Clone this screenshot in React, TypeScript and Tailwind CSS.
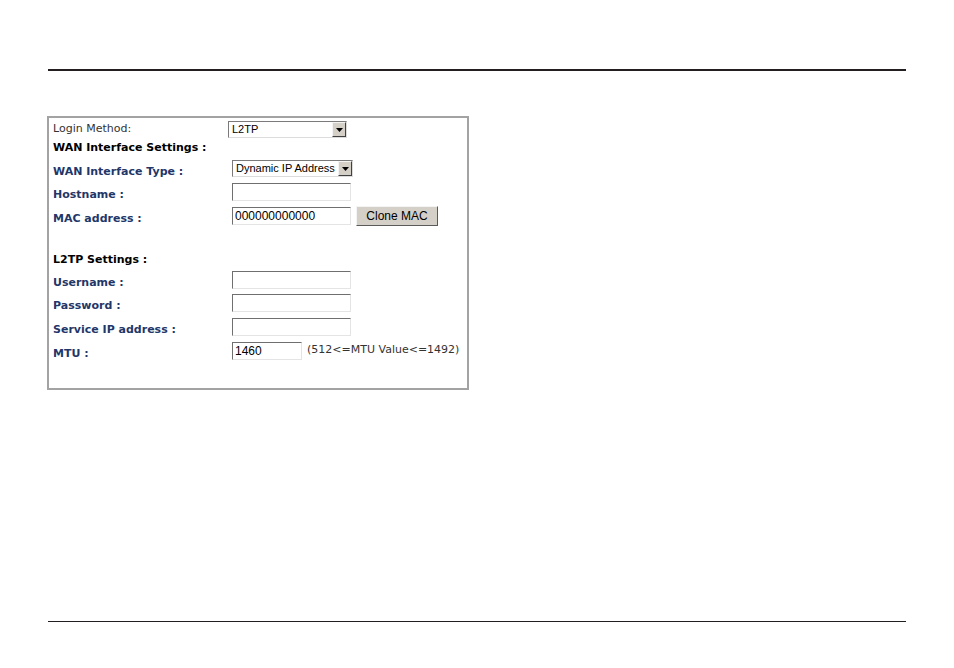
import React from "react";

const label = "font-['DejaVu_Sans',Verdana,sans-serif] text-[11px] font-bold text-[#1f3769]";
const heading = "font-['DejaVu_Sans',Verdana,sans-serif] text-[11px] font-bold text-black";

function TextBox({ value = "", w = "w-[119px]" }: { value?: string; w?: string }) {
  return (
    <div
      className={`${w} flex h-[18px] items-center border border-t-[#6f6f6f] border-l-[#6f6f6f] border-r-[#e4e4e4] border-b-[#e4e4e4] bg-white px-[2px] font-['Liberation_Sans',Arial,sans-serif] text-[12px] text-black`}
    >
      {value}
    </div>
  );
}

function SelectBox({ value, w }: { value: string; w: string }) {
  return (
    <div
      className={`${w} flex h-[17px] items-center border border-t-[#7a7a7a] border-l-[#7a7a7a] border-r-[#dcdcdc] border-b-[#dcdcdc] bg-white pl-[3px] font-['Liberation_Sans',Arial,sans-serif] text-[11px] text-black`}
    >
      <span className="flex-1 whitespace-nowrap">{value}</span>
      <div className="flex h-[15px] w-[14px] shrink-0 items-center justify-center border border-t-[#f4f4f4] border-l-[#f4f4f4] border-r-[#404040] border-b-[#404040] bg-[#d4d0c8]">
        <svg width="7" height="4" viewBox="0 0 7 4">
          <path d="M0 0h7L3.5 4z" fill="#000" />
        </svg>
      </div>
    </div>
  );
}

function Row({ h, children, title }: { h: string; children?: React.ReactNode; title: React.ReactNode }) {
  return (
    <div className={`flex ${h} items-center`}>
      <div className="w-[179px] shrink-0">{title}</div>
      {children}
    </div>
  );
}

export default function App() {
  return (
    <div className="h-[668px] w-[954px] bg-white">
      <div className="mx-[48px] pt-[69px]">
        <div className="h-[1.5px] bg-[#231f20]" />
        <div className="ml-[-1px] mt-[45px] h-[274px] w-[422px] border-2 border-[#a3a3a3] pl-[4px] pt-[3px]">
          <div className="flex h-[18px] items-center">
            <div className="w-[175px] shrink-0 font-['DejaVu_Sans',Verdana,sans-serif] text-[11px] text-[#333]">
              Login Method:
            </div>
            <SelectBox value="L2TP" w="w-[119px]" />
          </div>
          <div className="flex h-[19px] items-center">
            <div className={heading}>WAN Interface Settings :</div>
          </div>
          <Row h="h-[22px]" title={<span className={label}>WAN Interface Type :</span>}>
            <SelectBox value="Dynamic IP Address" w="w-[121px]" />
          </Row>
          <Row h="h-[24px]" title={<span className={label}>Hostname :</span>}>
            <TextBox />
          </Row>
          <Row h="h-[24px]" title={<span className={label}>MAC address :</span>}>
            <TextBox value="000000000000" />
            <button className="ml-[5px] h-[20px] w-[82px] border border-t-[#f4f4f4] border-l-[#f4f4f4] border-r-[#5a5a5a] border-b-[#5a5a5a] bg-[#d4d0c8] font-['Liberation_Sans',Arial,sans-serif] text-[12px] text-black">
              Clone MAC
            </button>
          </Row>
          <div className="h-[25px]" />
          <div className="flex h-[16px] items-center">
            <div className={heading}>L2TP Settings :</div>
          </div>
          <Row h="h-[22px]" title={<span className={label}>Username :</span>}>
            <TextBox />
          </Row>
          <Row h="h-[24px]" title={<span className={label}>Password :</span>}>
            <TextBox />
          </Row>
          <Row h="h-[24px]" title={<span className={label}>Service IP address :</span>}>
            <TextBox />
          </Row>
          <Row h="h-[24px]" title={<span className={label}>MTU :</span>}>
            <TextBox value="1460" w="w-[70px]" />
            <span className="ml-[5px] font-['DejaVu_Sans',Verdana,sans-serif] text-[11px] text-[#333]">
              (512&lt;=MTU Value&lt;=1492)
            </span>
          </Row>
        </div>
        <div className="mt-[231px] h-[1.5px] bg-[#231f20]" />
      </div>
    </div>
  );
}
